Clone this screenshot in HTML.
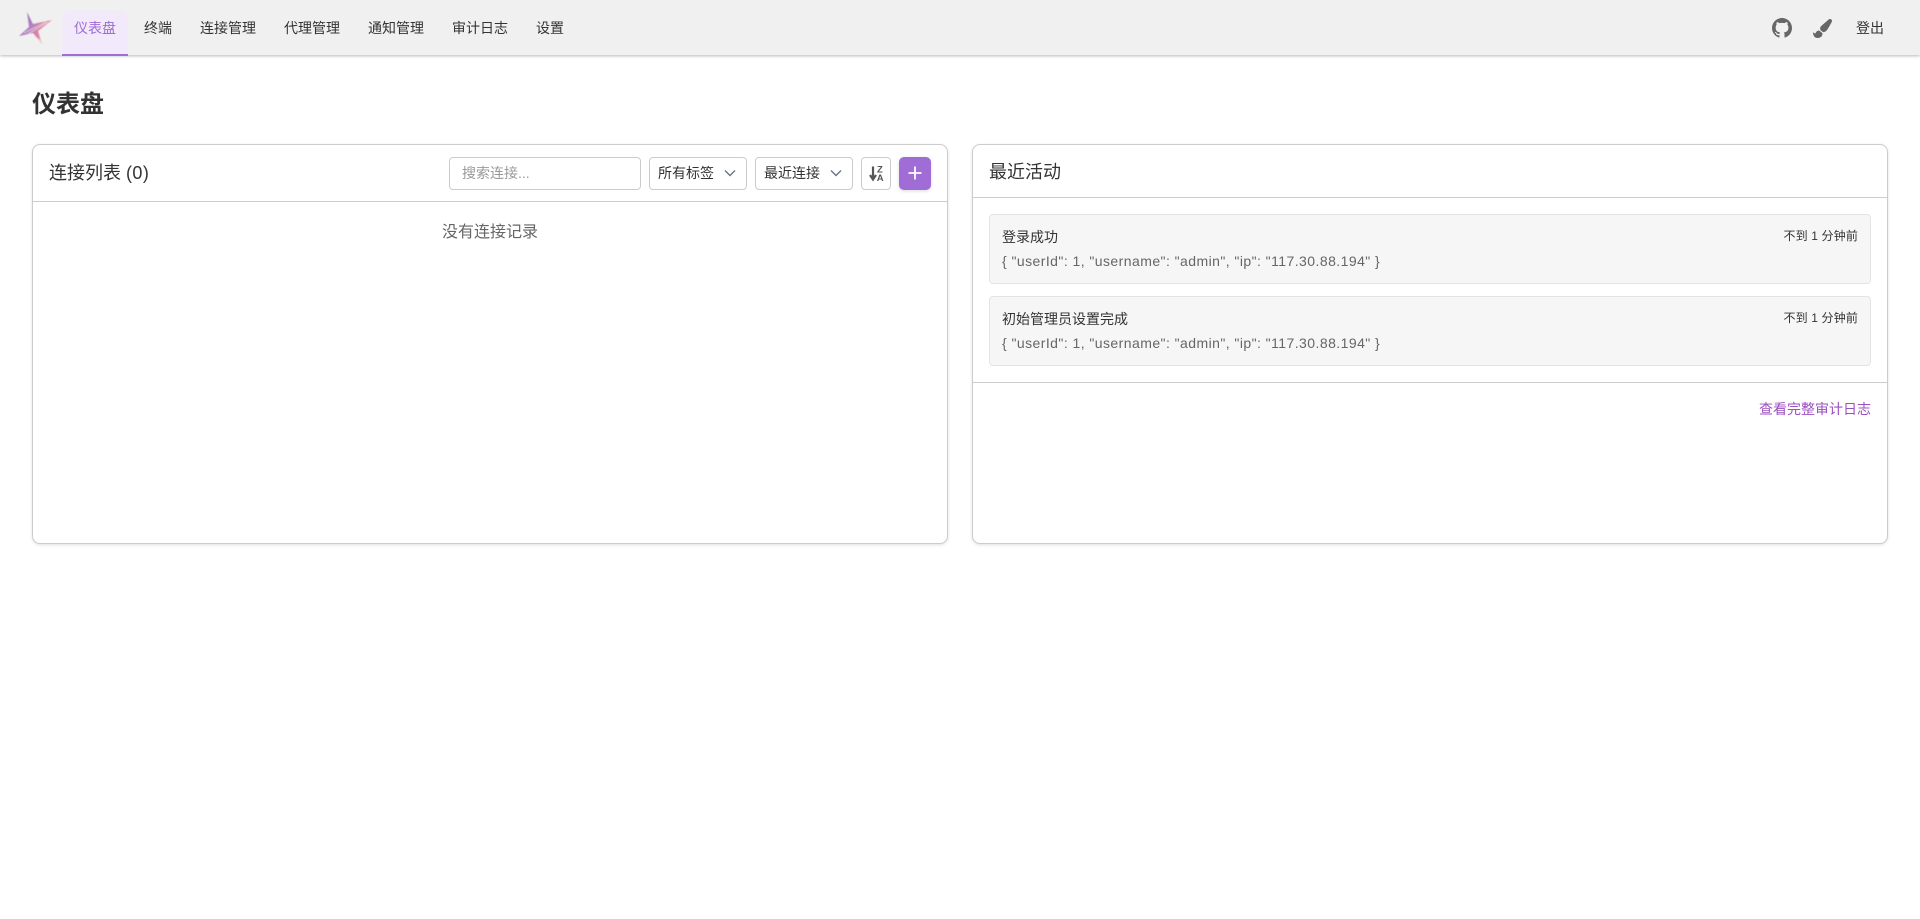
<!DOCTYPE html>
<html lang="zh-CN">
<head>
<meta charset="utf-8">
<title>仪表盘</title>
<style>
*{box-sizing:border-box}
html,body{margin:0;padding:0;width:1920px;height:919px;overflow:hidden;background:#fff;color:#333;
font-family:"Liberation Sans","Noto Sans CJK SC",sans-serif;font-size:14px}
.abs,nav a,.t{position:absolute;white-space:nowrap}
nav{position:absolute;left:0;top:0;width:1920px;height:55px;background:#f0f0f0;box-shadow:0 1px 3px rgba(0,0,0,.28)}
nav a{top:0;height:55px;line-height:56px;color:#333;text-decoration:none}
nav a.active{left:62px;width:66px;text-align:center;color:#a06cd5;}
.tabbg{position:absolute;left:62px;top:11px;width:66px;height:44px;background:#f2e9fb;border-radius:6px 6px 0 0}
.tabline{position:absolute;left:62px;top:54px;width:66px;height:2px;background:#a06cd5}
h1{position:absolute;left:32px;top:87px;margin:0;font-size:24px;line-height:36px;font-weight:700;color:#333}
.card{position:absolute;top:144px;width:916px;height:400px;background:#fff;border:1px solid #ccc;border-radius:8px;box-shadow:0 1px 3px rgba(0,0,0,.12)}
.line{position:absolute;height:1px;background:#ccc}
.title{position:absolute;font-size:18px;line-height:26px;color:#333;white-space:nowrap}
.ctl{position:absolute;top:157px;height:33px;border:1px solid #ccc;border-radius:4px;background:#fff;line-height:31px;white-space:nowrap}
.item{position:absolute;left:989px;width:882px;height:70px;background:#f6f6f6;border:1px solid #e4e4e4;border-radius:4px}
.d{letter-spacing:.44px}
</style>
</head>
<body>
<nav>
  <div class="tabbg"></div>
  <div class="tabline"></div>
  <svg class="abs" style="left:17px;top:11px;filter:blur(.6px)" width="36" height="36" viewBox="17 11 36 36">
    <defs>
      <linearGradient id="g" x1="0" y1="0" x2="1" y2=".6">
        <stop offset="0" stop-color="#7d62c0"/><stop offset=".45" stop-color="#a86cb8"/><stop offset=".75" stop-color="#e0708f"/><stop offset="1" stop-color="#eda0b0"/>
      </linearGradient>
    </defs>
    <path d="M27 12 L33 24 L52 20 L38 31 L42 44 L33 33 L19 36 L29 27 Z" fill="url(#g)" opacity=".85"/>
    <path d="M24 33 L46 22 M28 34 L48 22 M34 36 L42 42" stroke="#f0f0f0" stroke-width=".8" opacity=".8"/>
  </svg>
  <a class="active" href="#">仪表盘</a>
  <a style="left:144px" href="#">终端</a>
  <a style="left:200px" href="#">连接管理</a>
  <a style="left:284px" href="#">代理管理</a>
  <a style="left:368px" href="#">通知管理</a>
  <a style="left:452px" href="#">审计日志</a>
  <a style="left:536px" href="#">设置</a>
  <svg class="abs" style="left:1772px;top:18px" width="20" height="20" viewBox="0 0 16 16" fill="#666"><path d="M8 0C3.58 0 0 3.58 0 8c0 3.54 2.29 6.53 5.47 7.59.4.07.55-.17.55-.38 0-.19-.01-.82-.01-1.49-2.01.37-2.53-.49-2.69-.94-.09-.23-.48-.94-.82-1.13-.28-.15-.68-.52-.01-.53.63-.01 1.08.58 1.23.82.72 1.21 1.87.87 2.33.66.07-.52.28-.87.51-1.07-1.78-.2-3.64-.89-3.64-3.95 0-.87.31-1.59.82-2.15-.08-.2-.36-1.02.08-2.12 0 0 .67-.21 2.2.82.64-.18 1.32-.27 2-.27.68 0 1.36.09 2 .27 1.53-1.04 2.2-.82 2.2-.82.44 1.1.16 1.92.08 2.12.51.56.82 1.27.82 2.15 0 3.07-1.87 3.75-3.65 3.95.29.25.54.73.54 1.48 0 1.07-.01 1.93-.01 2.2 0 .21.15.46.55.38A8.013 8.013 0 0016 8c0-4.42-3.58-8-8-8z"/></svg>
  <svg class="abs" style="left:1813px;top:19px" width="19" height="19" viewBox="0 0 512 512" fill="#666"><path d="M167.02 309.34c-40.12 2.58-76.53 17.86-97.19 72.3-2.35 6.21-8 9.98-14.59 9.98-11.11 0-45.46-27.67-55.25-34.35C0 439.62 37.93 512 128 512c75.86 0 128-43.77 128-120.19 0-3.11-.65-6.08-.97-9.13l-88.01-73.34zM457.89 0c-15.16 0-29.37 6.71-40.21 16.45C213.27 199.05 192 203.34 192 257.09c0 13.7 3.25 26.76 8.73 38.7l63.82 53.18c7.21 1.8 14.64 3.03 22.39 3.03 62.11 0 98.11-45.47 211.16-256.46 7.38-14.35 13.9-29.85 13.9-45.99C512 20.64 486 0 457.89 0z"/></svg>
  <a style="left:1856px" href="#">登出</a>
</nav>

<h1>仪表盘</h1>

<div class="card" style="left:32px"></div>
<div class="line" style="left:33px;top:201px;width:914px"></div>
<div class="title" style="left:49px;top:160px">连接列表 <span style="letter-spacing:.4px">(0)</span></div>

<div class="ctl" style="left:449px;width:192px;padding-left:12px;color:#999">搜索连接...</div>

<div class="ctl" style="left:649px;width:98px;padding-left:8px">所有标签</div>
<svg class="abs" style="left:722px;top:165px" width="16" height="16" viewBox="0 0 16 16" fill="none" stroke="#6b7280" stroke-width="1.4"><path d="M3 5.5l5 5 5-5"/></svg>

<div class="ctl" style="left:755px;width:98px;padding-left:8px">最近连接</div>
<svg class="abs" style="left:828px;top:165px" width="16" height="16" viewBox="0 0 16 16" fill="none" stroke="#6b7280" stroke-width="1.4"><path d="M3 5.5l5 5 5-5"/></svg>

<div class="ctl" style="left:861px;width:30px"></div>
<svg class="abs" style="left:869px;top:165px" width="16" height="17" viewBox="0 0 16 17">
  <path d="M4 1.5v12M1 10l3 4.5L7 10" fill="none" stroke="#555" stroke-width="2.2"/>
  <text x="8" y="7.5" font-family="Liberation Sans" font-size="9.5" font-weight="700" fill="#555">Z</text>
  <text x="7.8" y="15.8" font-family="Liberation Sans" font-size="9.5" font-weight="700" fill="#555">A</text>
</svg>

<div class="abs" style="left:899px;top:157px;width:32px;height:33px;background:#a06cd5;border-radius:5px;box-shadow:0 1px 3px rgba(0,0,0,.15)"></div>
<svg class="abs" style="left:907px;top:165px" width="16" height="16" viewBox="0 0 16 16" stroke="#fff" stroke-width="1.8"><path d="M8 1.5v13M1.5 8h13"/></svg>

<div class="t" style="left:33px;width:914px;top:221px;text-align:center;font-size:16px;line-height:24px;color:#666">没有连接记录</div>

<div class="card" style="left:972px"></div>
<div class="line" style="left:973px;top:197px;width:914px"></div>
<div class="title" style="left:989px;top:159px">最近活动</div>

<div class="item" style="top:214px"></div>
<div class="t" style="left:1002px;top:227px;line-height:20px">登录成功</div>
<div class="t d" style="left:1002px;top:251px;line-height:20px;color:#666">{ "userId": 1, "username": "admin", "ip": "117.30.88.194" }</div>
<div class="t" style="right:62px;top:226px;font-size:12px;line-height:20px;letter-spacing:.15px">不到 1 分钟前</div>

<div class="item" style="top:296px"></div>
<div class="t" style="left:1002px;top:309px;line-height:20px">初始管理员设置完成</div>
<div class="t d" style="left:1002px;top:333px;line-height:20px;color:#666">{ "userId": 1, "username": "admin", "ip": "117.30.88.194" }</div>
<div class="t" style="right:62px;top:308px;font-size:12px;line-height:20px;letter-spacing:.15px">不到 1 分钟前</div>

<div class="line" style="left:973px;top:382px;width:914px"></div>
<a class="t" style="right:49px;top:399px;line-height:20px;color:#9b4fc0;text-decoration:none" href="#">查看完整审计日志</a>
</body>
</html>
